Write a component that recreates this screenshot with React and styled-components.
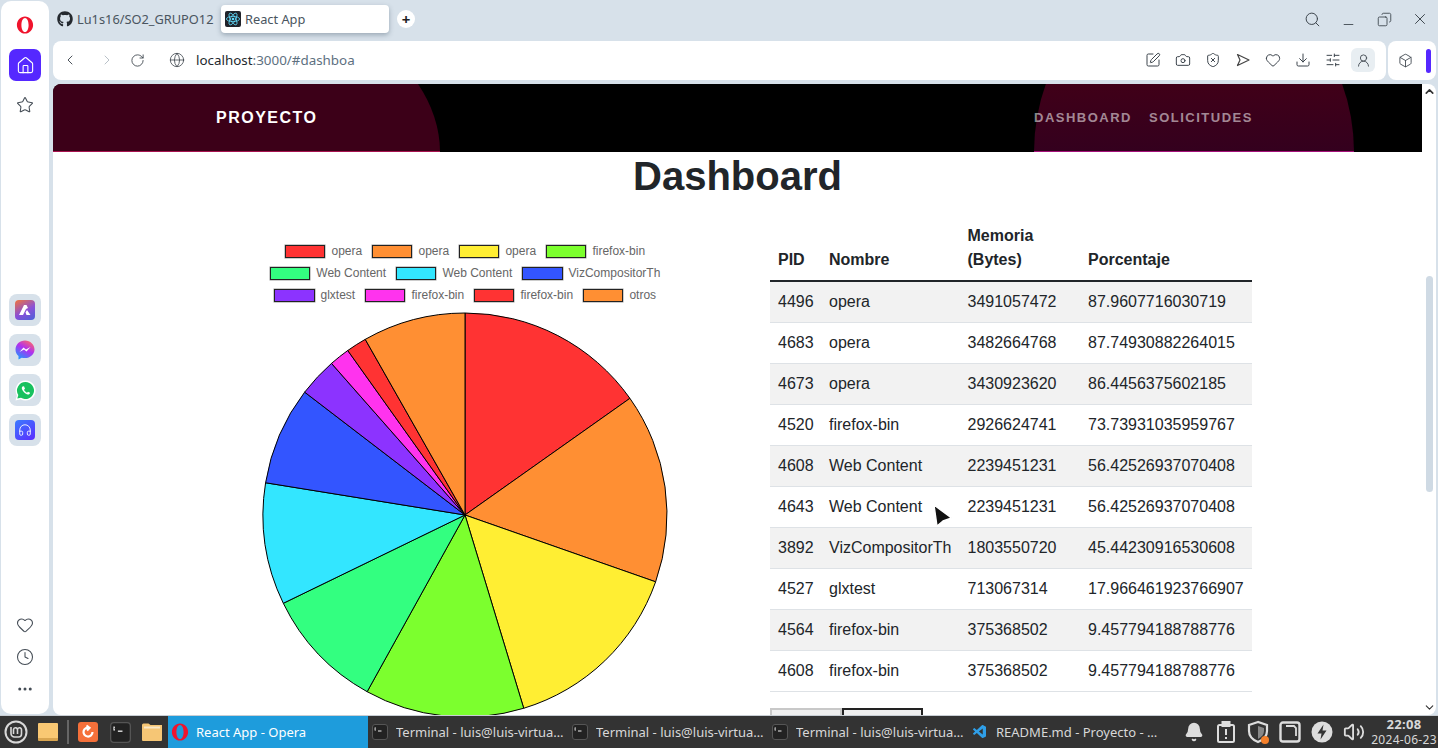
import React from "react";
import styled, { createGlobalStyle } from "styled-components";
import {
  Bell,
  Box,
  Camera,
  ChevronDown,
  ChevronLeft,
  ChevronRight,
  ChevronUp,
  Clock,
  Copy,
  Download,
  Ellipsis,
  Globe,
  Headphones,
  Heart,
  House,
  Minus,
  RotateCw,
  Search,
  ShieldX,
  SlidersHorizontal,
  SquarePen,
  Star,
  UserRound,
  Volume2,
  X,
} from "lucide-react";
import { FaGithub } from "react-icons/fa";
import { VscVscode } from "react-icons/vsc";

const SLICE_COLORS = [
  "#ff3333",
  "#ff8f33",
  "#ffee33",
  "#7cff2e",
  "#33ff80",
  "#33e6ff",
  "#3355ff",
  "#8c33ff",
  "#ff33ee",
  "#ff3333",
  "#ff8f33",
];

const PROCESSES = [
  { pid: 4496, name: "opera", bytes: 3491057472, percent: "87.9607716030719" },
  { pid: 4683, name: "opera", bytes: 3482664768, percent: "87.74930882264015" },
  { pid: 4673, name: "opera", bytes: 3430923620, percent: "86.4456375602185" },
  { pid: 4520, name: "firefox-bin", bytes: 2926624741, percent: "73.73931035959767" },
  { pid: 4608, name: "Web Content", bytes: 2239451231, percent: "56.42526937070408" },
  { pid: 4643, name: "Web Content", bytes: 2239451231, percent: "56.42526937070408" },
  { pid: 3892, name: "VizCompositorTh", bytes: 1803550720, percent: "45.44230916530608" },
  { pid: 4527, name: "glxtest", bytes: 713067314, percent: "17.966461923766907" },
  { pid: 4564, name: "firefox-bin", bytes: 375368502, percent: "9.457794188788776" },
  { pid: 4608, name: "firefox-bin", bytes: 375368502, percent: "9.457794188788776" },
];

const OTHERS_BYTES = 1888000000;

const SLICES = [
  ...PROCESSES.map((p) => ({ label: p.name, value: p.bytes })),
  { label: "otros", value: OTHERS_BYTES },
].map((s, i) => ({ ...s, color: SLICE_COLORS[i] }));

const LEGEND_ROWS = [SLICES.slice(0, 4), SLICES.slice(4, 7), SLICES.slice(7)];

function slicePaths(cx, cy, r) {
  const total = SLICES.reduce((acc, s) => acc + s.value, 0);
  let angle = -Math.PI / 2;
  return SLICES.map((s) => {
    const next = angle + (s.value / total) * Math.PI * 2;
    const large = next - angle > Math.PI ? 1 : 0;
    const d = `M${cx} ${cy}L${cx + r * Math.cos(angle)} ${cy + r * Math.sin(angle)}A${r} ${r} 0 ${large} 1 ${cx + r * Math.cos(next)} ${cy + r * Math.sin(next)}Z`;
    angle = next;
    return { d, color: s.color };
  });
}

function OperaLogo({ size = 20 }) {
  return (
    <svg width={size} height={size} viewBox="0 0 20 20">
      <path
        fillRule="evenodd"
        d="M10 .5c5 0 9 4.200 9 9.500s-4 9.500-9 9.500S1 15.300 1 10 5 .5 10 .5Zm0 1.600c-2.300 0-4 3.500-4 7.900s1.700 7.900 4 7.900 4-3.500 4-7.900-1.700-7.900-4-7.900Z"
        fill="#f0142d"
      />
    </svg>
  );
}

function ReactLogo() {
  return (
    <svg width="16" height="16" viewBox="0 0 16 16">
      <rect width="16" height="16" rx="2" fill="#20232a" />
      <g fill="none" stroke="#61dafb" strokeWidth="0.8">
        <ellipse cx="8" cy="8" rx="6.6" ry="2.6" />
        <ellipse cx="8" cy="8" rx="6.6" ry="2.6" transform="rotate(60 8 8)" />
        <ellipse cx="8" cy="8" rx="6.6" ry="2.6" transform="rotate(120 8 8)" />
      </g>
      <circle cx="8" cy="8" r="1.3" fill="#61dafb" />
    </svg>
  );
}

function SendArrow() {
  return (
    <svg width="16" height="16" viewBox="0 0 16 16" fill="none" stroke="#444" strokeWidth="1.2" strokeLinejoin="round">
      <path d="M2.5 2.5 14 8 2.5 13.5 5 8Z" />
    </svg>
  );
}

function MessengerLogo() {
  return (
    <svg width="20" height="20" viewBox="0 0 20 20">
      <defs>
        <linearGradient id="messengerFill" x1="0.8" y1="0" x2="0.2" y2="1">
          <stop offset="0" stopColor="#ff6a68" />
          <stop offset="0.45" stopColor="#b030f0" />
          <stop offset="1" stopColor="#1a9cff" />
        </linearGradient>
      </defs>
      <path
        d="M10 .5C4.700.5.500 4.400.500 9.500c0 2.700 1.200 5 3 6.600v3.400l3.200-1.800c1 .3 2.100.400 3.300.400 5.300 0 9.500-3.900 9.500-8.600S15.300.5 10 .5Z"
        fill="url(#messengerFill)"
      />
      <path d="M4.500 12 8.500 7.500l2.500 2 4.500-2.500-4 4.500-2.500-2Z" fill="#fff" />
    </svg>
  );
}

function WhatsappLogo() {
  return (
    <svg width="21" height="21" viewBox="0 0 21 21">
      <path d="M10.500.5a10 10 0 0 0-8.600 15L.5 20.500l5.200-1.300A10 10 0 1 0 10.500.5Z" fill="#fff" />
      <path d="M10.500 2a8.500 8.500 0 0 0-7.200 13l-1 3.600 3.700-.9A8.500 8.500 0 1 0 10.500 2Z" fill="#19c15f" />
      <path d="M7.500 6.500c-1 1-1 2.500.5 4.500s3.500 3.500 5 3.500c1 0 2-.8 2-1.800l-2-1-1 1c-1-.3-2.500-1.800-3-3l1-1-1-2.500Z" fill="#fff" />
    </svg>
  );
}

function TerminalIcon({ size = 16 }) {
  return (
    <svg width={size} height={size} viewBox="0 0 16 16">
      <rect x="0.5" y="0.5" width="15" height="15" rx="2.5" fill="#222" stroke="#555" />
      <path d="M3 3.5v3M3.8 4H3M3 6h.8" stroke="#eee" strokeWidth="0.8" fill="none" />
      <path d="M6 7h3.5" stroke="#eee" strokeWidth="1" />
    </svg>
  );
}

function FolderIcon() {
  return (
    <svg width="20" height="18" viewBox="0 0 20 18">
      <path d="M0 2a1.5 1.5 0 0 1 1.5-1.5h5L8.5 2H20v15a1 1 0 0 1-1 1H1a1 1 0 0 1-1-1Z" fill="#f6c675" />
      <rect x="2" y="3.5" width="16" height="2" fill="#fbe8c6" />
    </svg>
  );
}

function MintLogo() {
  return (
    <svg width="24" height="24" viewBox="0 0 24 24" fill="none" stroke="#d8d8d8">
      <circle cx="12" cy="12" r="10.5" strokeWidth="2" />
      <path d="M7 7v6.500a3.500 3.500 0 0 0 3.500 3.500h4a3 3 0 0 0 3-3V10a2 2 0 0 0-4-.4V14M13.500 10a2 2 0 0 0-4-.4V14" strokeWidth="1.6" />
    </svg>
  );
}

function UpdateIcon() {
  return (
    <svg width="20" height="20" viewBox="0 0 20 20">
      <rect width="20" height="20" rx="3" fill="#f5703a" />
      <path d="M14.500 10a4.500 4.500 0 1 1-3-4.200M8.500 3.500l3 2.300-2.500 2.700" fill="none" stroke="#fff" strokeWidth="2.200" />
    </svg>
  );
}

function ClipboardAlert() {
  return (
    <svg width="20" height="22" viewBox="0 0 20 22" fill="none" stroke="#ddd" strokeWidth="2">
      <rect x="2" y="4" width="16" height="17" rx="1.500" />
      <rect x="6.500" y="1" width="7" height="4" fill="#ddd" />
      <path d="M10 8v6M10 16v2" />
    </svg>
  );
}

function TrayShield() {
  return (
    <svg width="24" height="24" viewBox="0 0 24 24">
      <path d="M12 2 3 5v6c0 5 4 9 9 11 5-2 9-6 9-11V5Z" fill="none" stroke="#ddd" strokeWidth="2.200" />
      <path d="M12 6v13c4-2 6-5 6-8V8Z" fill="#888" />
      <circle cx="19" cy="20" r="4" fill="#f5802a" />
    </svg>
  );
}

function TraySquare() {
  return (
    <svg width="22" height="22" viewBox="0 0 22 22" fill="none" stroke="#ddd" strokeWidth="2.400">
      <path d="M4 1.500h14a2.500 2.500 0 0 1 2.500 2.500v14a2.500 2.500 0 0 1-2.500 2.500H4A2.500 2.500 0 0 1 1.500 18V4A2.500 2.500 0 0 1 4 1.500Z" />
      <path d="M7 5h8l2 2v8" strokeWidth="1.800" />
    </svg>
  );
}

function BoltBadge() {
  return (
    <svg width="22" height="22" viewBox="0 0 22 22">
      <circle cx="11" cy="11" r="10.500" fill="#ddd" />
      <path d="M12.500 3.500 6.500 12.500h4l-1 6 6-9h-4Z" fill="#333" />
    </svg>
  );
}

function MouseCursor() {
  return (
    <svg width="22" height="24" viewBox="0 0 22 24">
      <path d="M2 1 19.500 14l-8.500 3-6 5Z" fill="#111" stroke="#fff" strokeWidth="1.400" strokeLinejoin="round" />
    </svg>
  );
}

const TOOLBAR_ICONS = [
  <SquarePen key="edit" size={16} strokeWidth={1.5} />,
  <Camera key="camera" size={16} strokeWidth={1.5} />,
  <ShieldX key="shield" size={16} strokeWidth={1.5} />,
  <SendArrow key="send" />,
  <Heart key="heart" size={16} strokeWidth={1.5} />,
  <Download key="download" size={16} strokeWidth={1.5} />,
  <SlidersHorizontal key="sliders" size={16} strokeWidth={1.5} />,
];

const WINDOWS = [
  { title: "Terminal - luis@luis-virtua…", icon: <TerminalIcon /> },
  { title: "Terminal - luis@luis-virtua…", icon: <TerminalIcon /> },
  { title: "Terminal - luis@luis-virtua…", icon: <TerminalIcon /> },
  { title: "README.md - Proyecto - …", icon: <VscVscode size={16} color="#2f9fe8" /> },
];

const TRAY_ICONS = [
  <Bell key="bell" size={20} fill="#ddd" color="#ddd" />,
  <ClipboardAlert key="clipboard" />,
  <TrayShield key="shield" />,
  <TraySquare key="square" />,
  <BoltBadge key="bolt" />,
  <Volume2 key="volume" size={22} color="#ddd" />,
];

function App() {
  return (
    <Screen>
      <GlobalStyle />
      <Desktop>
        <Sidebar>
          <OperaSlot>
            <OperaLogo size={18} />
          </OperaSlot>
          <HomeButton>
            <House size={19} strokeWidth={1.4} />
          </HomeButton>
          <SideIcon>
            <Star size={18} strokeWidth={1.4} />
          </SideIcon>
          <AppList>
            <AppButton>
              <AppTile $bg="linear-gradient(150deg,#f2763a,#8a4fd8 55%,#4a62d8)">
                <svg width="16" height="16" viewBox="0 0 16 16">
                  <path d="M2 13 7 3h2.500l1.500 3-2 1-3 6Zm7.500 0L8.500 10.500 10 8l3.500 5Z" fill="#fff" />
                </svg>
              </AppTile>
            </AppButton>
            <AppButton>
              <MessengerLogo />
            </AppButton>
            <AppButton>
              <WhatsappLogo />
            </AppButton>
            <AppButton>
              <AppTile $bg="linear-gradient(145deg,#3a7cff,#5b2cff)">
                <Headphones size={14} color="#fff" strokeWidth={1.5} />
              </AppTile>
            </AppButton>
          </AppList>
          <SideBottom>
            <SideIcon>
              <Heart size={18} strokeWidth={1.4} />
            </SideIcon>
            <SideIcon>
              <Clock size={18} strokeWidth={1.4} />
            </SideIcon>
            <SideIcon>
              <Ellipsis size={18} strokeWidth={2} />
            </SideIcon>
          </SideBottom>
        </Sidebar>

        <BrowserColumn>
          <TabBar>
            <Tab>
              <FaGithub size={16} color="#24292f" />
              <span>Lu1s16/SO2_GRUPO12</span>
            </Tab>
            <ActiveTab>
              <ReactLogo />
              <span>React App</span>
            </ActiveTab>
            <NewTab>+</NewTab>
            <WindowControls>
              <ControlSlot>
                <Search size={17} strokeWidth={1.4} />
              </ControlSlot>
              <ControlSlot>
                <MinimizeIcon size={15} strokeWidth={1.4} />
              </ControlSlot>
              <ControlSlot>
                <RestoreIcon size={15} strokeWidth={1.4} />
              </ControlSlot>
              <ControlSlot>
                <X size={18} strokeWidth={1.3} />
              </ControlSlot>
            </WindowControls>
          </TabBar>

          <ToolbarRow>
            <AddressBar>
              <NavIcon $width={37}>
                <ChevronLeft size={16} strokeWidth={1.4} />
              </NavIcon>
              <NavIcon $width={31} $muted>
                <ChevronRight size={16} strokeWidth={1.4} />
              </NavIcon>
              <NavIcon $width={39}>
                <RotateCw size={15} strokeWidth={1.4} />
              </NavIcon>
              <NavIcon $width={27}>
                <Globe size={16} strokeWidth={1.2} />
              </NavIcon>
              <Url>
                localhost<UrlRest>:3000/#dashboa</UrlRest>
              </Url>
              <ToolIcons>
                {TOOLBAR_ICONS.map((icon) => (
                  <ToolIcon key={icon.key}>{icon}</ToolIcon>
                ))}
                <ProfileButton>
                  <UserRound size={15} strokeWidth={1.4} />
                </ProfileButton>
              </ToolIcons>
            </AddressBar>
            <ExtensionPanel>
              <Box size={15} strokeWidth={1.4} />
              <AccentBar />
            </ExtensionPanel>
          </ToolbarRow>

          <Viewport>
            <Page>
              <Navbar>
                <BrandPanel>
                  <BrandName>PROYECTO</BrandName>
                </BrandPanel>
                <LinksPanel>
                  <NavLink>DASHBOARD</NavLink>
                  <NavLink>SOLICITUDES</NavLink>
                </LinksPanel>
              </Navbar>
              <Title>Dashboard</Title>
              <Columns>
                <ChartColumn>
                  <Legend>
                    {LEGEND_ROWS.map((row, i) => (
                      <LegendRow key={i}>
                        {row.map((s, j) => (
                          <LegendItem key={j}>
                            <Swatch $color={s.color} />
                            {s.label}
                          </LegendItem>
                        ))}
                      </LegendRow>
                    ))}
                  </Legend>
                  <PieSvg width="406" height="406" viewBox="0 0 406 406">
                    {slicePaths(203, 203, 202).map((p, i) => (
                      <path key={i} d={p.d} fill={p.color} stroke="#000" strokeWidth="1" />
                    ))}
                  </PieSvg>
                </ChartColumn>
                <TableColumn>
                  <Table>
                    <colgroup>
                      <col width="51" />
                      <col width="138.5" />
                      <col width="120.5" />
                      <col width="172" />
                    </colgroup>
                    <thead>
                      <tr>
                        <Th>PID</Th>
                        <Th>Nombre</Th>
                        <Th>
                          Memoria
                          <br />
                          (Bytes)
                        </Th>
                        <Th>Porcentaje</Th>
                      </tr>
                    </thead>
                    <tbody>
                      {PROCESSES.map((p, i) => (
                        <Row key={i} $striped={i % 2 === 0}>
                          <Td>{p.pid}</Td>
                          <Td>{p.name}</Td>
                          <Td>{p.bytes}</Td>
                          <Td>{p.percent}</Td>
                        </Row>
                      ))}
                    </tbody>
                  </Table>
                  <Pager>
                    <PagerButton $width={72} />
                    <PagerButton $width={81} $focused />
                  </Pager>
                </TableColumn>
              </Columns>
              <CursorLayer>
                <MouseCursor />
              </CursorLayer>
            </Page>
            <Scrollbar>
              <ScrollArrow>
                <ChevronUp size={13} strokeWidth={3} />
              </ScrollArrow>
              <ScrollThumb />
              <ScrollArrow $end>
                <ChevronDown size={13} strokeWidth={2} />
              </ScrollArrow>
            </Scrollbar>
          </Viewport>
        </BrowserColumn>
      </Desktop>

      <Taskbar>
        <Launcher>
          <LauncherSlot>
            <MintLogo />
          </LauncherSlot>
          <LauncherSlot>
            <DesktopTile />
          </LauncherSlot>
          <Separator />
          <LauncherSlot>
            <UpdateIcon />
          </LauncherSlot>
          <LauncherSlot>
            <TerminalIcon size={21} />
          </LauncherSlot>
          <LauncherSlot>
            <FolderIcon />
          </LauncherSlot>
        </Launcher>
        <WindowButton $active>
          <OperaLogo size={18} />
          <ActiveWindowTitle>React App - Opera</ActiveWindowTitle>
        </WindowButton>
        {WINDOWS.map((w, i) => (
          <WindowButton key={i}>
            {w.icon}
            <WindowTitle>{w.title}</WindowTitle>
          </WindowButton>
        ))}
        <Tray>
          {TRAY_ICONS.map((icon) => (
            <TraySlot key={icon.key}>{icon}</TraySlot>
          ))}
          <TrayClock>
            <strong>22:08</strong>
            <span>2024-06-23</span>
          </TrayClock>
        </Tray>
      </Taskbar>
    </Screen>
  );
}

const GlobalStyle = createGlobalStyle`
  html, body {
    margin: 0;
    padding: 0;
    overflow: hidden;
  }
  * {
    box-sizing: border-box;
  }
`;

const Screen = styled.div`
  width: 1438px;
  height: 748px;
  display: grid;
  grid-template-rows: 715px 33px;
  background: #d7e1ea;
  font-family: "Noto Sans", sans-serif;
  overflow: hidden;
`;

const Desktop = styled.div`
  display: flex;
  min-height: 0;
`;

const Sidebar = styled.aside`
  width: 48px;
  margin: 1px 4px 1px 1px;
  background: #fff;
  border-radius: 10px;
  display: flex;
  flex-direction: column;
  align-items: center;
  color: #444c55;
`;

const OperaSlot = styled.div`
  height: 48px;
  display: flex;
  align-items: center;
  justify-content: center;
`;

const HomeButton = styled.div`
  width: 32px;
  height: 32px;
  border-radius: 7px;
  background: #5528ff;
  color: #fff;
  display: flex;
  align-items: center;
  justify-content: center;
`;

const SideIcon = styled.div`
  width: 32px;
  height: 32px;
  margin-top: 8px;
  display: flex;
  align-items: center;
  justify-content: center;
`;

const AppList = styled.div`
  margin-top: 173px;
  display: flex;
  flex-direction: column;
  gap: 8px;
`;

const AppButton = styled.div`
  width: 32px;
  height: 32px;
  border-radius: 8px;
  background: #d7e1ea;
  display: flex;
  align-items: center;
  justify-content: center;
`;

const AppTile = styled.div`
  width: 20px;
  height: 20px;
  border-radius: 4px;
  background: ${(p) => p.$bg};
  display: flex;
  align-items: center;
  justify-content: center;
`;

const SideBottom = styled.div`
  margin-top: auto;
  padding-bottom: 9px;
  display: flex;
  flex-direction: column;
  & > div {
    margin-top: 0;
  }
`;

const BrowserColumn = styled.div`
  flex: 1;
  min-width: 0;
  display: flex;
  flex-direction: column;
`;

const TabBar = styled.div`
  height: 41px;
  padding: 5px 0 8px 4px;
  display: flex;
  align-items: center;
  font-size: 12.8px;
  color: #4a5560;
`;

const Tab = styled.div`
  width: 164px;
  display: flex;
  align-items: center;
  gap: 4px;
  white-space: nowrap;
`;

const ActiveTab = styled.div`
  width: 168px;
  height: 28px;
  padding-left: 4px;
  background: #fff;
  border-radius: 4px;
  box-shadow: 0 2px 5px rgba(40, 60, 80, 0.35);
  display: flex;
  align-items: center;
  gap: 4px;
`;

const NewTab = styled.div`
  width: 18px;
  height: 18px;
  margin-left: 8px;
  border-radius: 50%;
  background: #fff;
  color: #222;
  font-weight: 700;
  font-size: 15px;
  line-height: 18px;
  text-align: center;
`;

const WindowControls = styled.div`
  margin-left: auto;
  display: flex;
  align-items: center;
  color: #3d454d;
`;

const ControlSlot = styled.div`
  width: 36px;
  display: flex;
  justify-content: center;
`;

const MinimizeIcon = styled(Minus)`
  transform: translateY(5px);
`;

const RestoreIcon = styled(Copy)`
  transform: scaleX(-1);
`;

const ToolbarRow = styled.div`
  height: 39px;
  display: flex;
  gap: 2px;
  padding-right: 2px;
`;

const AddressBar = styled.div`
  flex: 1;
  background: #fff;
  border-radius: 8px;
  display: flex;
  align-items: center;
  padding: 0 0 1px 9px;
  color: #3d454d;
`;

const NavIcon = styled.div`
  width: ${(p) => p.$width}px;
  display: flex;
  color: ${(p) => (p.$muted ? "#b4bcc4" : "#3d454d")};
`;

const Url = styled.div`
  font-size: 13.4px;
  color: #23282d;
`;

const UrlRest = styled.span`
  color: #5d7080;
`;

const ToolIcons = styled.div`
  margin-left: auto;
  padding-right: 11px;
  display: flex;
  align-items: center;
`;

const ToolIcon = styled.div`
  width: 30px;
  display: flex;
  justify-content: center;
`;

const ProfileButton = styled.div`
  width: 24px;
  height: 24px;
  margin-left: 3px;
  border-radius: 6px;
  background: #e8eef2;
  display: flex;
  align-items: center;
  justify-content: center;
`;

const ExtensionPanel = styled.div`
  width: 48px;
  background: #fff;
  border-radius: 8px;
  display: flex;
  align-items: center;
  padding-left: 10px;
  gap: 13px;
  color: #3d454d;
`;

const AccentBar = styled.div`
  width: 5px;
  height: 24px;
  border-radius: 3px;
  background: #5528ff;
`;

const Viewport = styled.div`
  margin: 4px 2px 0 0;
  flex: 1;
  min-height: 0;
  background: #fff;
  border-radius: 8px;
  display: flex;
  overflow: hidden;
`;

const Page = styled.main`
  position: relative;
  width: 1369px;
  overflow: hidden;
  font-family: "Liberation Sans", Arial, sans-serif;
  color: #212529;
`;

const Navbar = styled.nav`
  height: 68px;
  background: #000;
  display: flex;
  justify-content: space-between;
  padding-right: 68px;
`;

const BrandPanel = styled.div`
  position: relative;
  width: 387px;
  padding: 0 0 1px 163px;
  display: flex;
  align-items: center;
  &::before {
    content: "";
    position: absolute;
    inset: 0;
    background: #3c0018;
    border-bottom: 1px solid #a8124f;
    clip-path: ellipse(297px 180px at 90px 100%);
  }
`;

const BrandName = styled.span`
  position: relative;
  color: #fff;
  font-size: 16px;
  font-weight: 700;
  letter-spacing: 1.5px;
`;

const LinksPanel = styled.div`
  position: relative;
  width: 320px;
  padding-bottom: 2px;
  display: flex;
  align-items: center;
  gap: 17px;
  &::before {
    content: "";
    position: absolute;
    inset: 0;
    background: linear-gradient(#400018, #34001e);
    border-bottom: 1px solid #a5107a;
    clip-path: ellipse(160px 180px at 50% 100%);
  }
`;

const NavLink = styled.a`
  position: relative;
  color: rgba(255, 255, 255, 0.55);
  font-size: 13px;
  font-weight: 700;
  letter-spacing: 1.5px;
`;

const Title = styled.h1`
  margin: 0;
  height: 48px;
  font-size: 40px;
  line-height: 48px;
  font-weight: 700;
  text-align: center;
`;

const Columns = styled.div`
  display: flex;
  padding: 16px 0 0 197px;
  gap: 90px;
`;

const ChartColumn = styled.section`
  width: 430px;
  padding-top: 24px;
  display: flex;
  flex-direction: column;
  align-items: center;
`;

const Legend = styled.div`
  display: flex;
  flex-direction: column;
  font-size: 12px;
  color: #666;
`;

const LegendRow = styled.div`
  height: 22px;
  display: flex;
  justify-content: center;
  align-items: center;
  gap: 9.7px;
`;

const LegendItem = styled.div`
  display: flex;
  align-items: center;
  gap: 6px;
  white-space: nowrap;
`;

const Swatch = styled.span`
  width: 40.6px;
  height: 13px;
  background: ${(p) => p.$color};
  border: 1px solid #222;
  box-shadow: 0 0 0 0.5px rgba(0, 0, 0, 0.4);
`;

const PieSvg = styled.svg`
  display: block;
  margin-top: 6px;
  flex: none;
`;

const TableColumn = styled.section`
  width: 482px;
`;

const Table = styled.table`
  width: 482px;
  table-layout: fixed;
  border-collapse: collapse;
  margin-bottom: 16px;
  font-size: 16px;
  line-height: 24px;
`;

const Th = styled.th`
  padding: 8px;
  text-align: left;
  vertical-align: bottom;
  font-weight: 700;
  border-bottom: 2px solid #212529;
`;

const Row = styled.tr`
  background: ${(p) => (p.$striped ? "#f2f2f2" : "#fff")};
`;

const Td = styled.td`
  padding: 8px;
  white-space: nowrap;
  border-bottom: 1px solid #dee2e6;
`;

const Pager = styled.div`
  display: flex;
`;

const PagerButton = styled.button`
  width: ${(p) => p.$width}px;
  height: 30px;
  background: #efefef;
  border: 2px solid ${(p) => (p.$focused ? "#222" : "#c8c8c8")};
`;

const CursorLayer = styled.div`
  position: absolute;
  left: 879px;
  top: 420px;
  line-height: 0;
`;

const Scrollbar = styled.div`
  width: 14px;
  padding-bottom: 1px;
  display: flex;
  flex-direction: column;
  align-items: center;
  color: #333;
`;

const ScrollArrow = styled.div`
  height: 14px;
  margin-top: ${(p) => (p.$end ? "auto" : "0")};
  padding-top: 1px;
  line-height: 0;
`;

const ScrollThumb = styled.div`
  width: 7px;
  height: 216px;
  margin-top: 178px;
  border-radius: 4px;
  background: #cfdae4;
`;

const Taskbar = styled.footer`
  background: #333;
  border-top: 1px solid #c8ced4;
  display: flex;
  align-items: center;
  font-size: 13px;
  color: #d8d8d8;
`;

const Launcher = styled.div`
  width: 168px;
  display: flex;
  align-items: center;
`;

const LauncherSlot = styled.div`
  width: 32px;
  display: flex;
  justify-content: center;
  align-items: center;
`;

const DesktopTile = styled.div`
  width: 20px;
  height: 18px;
  border-radius: 1px;
  background: linear-gradient(#f9c873 85%, #d9a550 85%);
`;

const Separator = styled.div`
  width: 2px;
  height: 24px;
  margin: 0 3px;
  background: #666;
`;

const WindowButton = styled.div`
  width: 200px;
  height: 32px;
  padding-left: ${(p) => (p.$active ? "3px" : "4px")};
  background: ${(p) => (p.$active ? "#1e9cdc" : "transparent")};
  display: flex;
  align-items: center;
  gap: ${(p) => (p.$active ? "7px" : "8px")};
`;

const WindowTitle = styled.span`
  width: 172px;
  white-space: nowrap;
  overflow: hidden;
`;

const ActiveWindowTitle = styled(WindowTitle)`
  color: #fff;
`;

const Tray = styled.div`
  margin-left: 10px;
  flex: 1;
  display: flex;
  align-items: center;
`;

const TraySlot = styled.div`
  width: 32px;
  display: flex;
  justify-content: center;
`;

const TrayClock = styled.div`
  flex: 1;
  display: flex;
  flex-direction: column;
  align-items: center;
  font-size: 12px;
  letter-spacing: 0.3px;
  line-height: 15px;
  white-space: nowrap;
  & strong {
    font-size: 13px;
  }
`;

export default App;
